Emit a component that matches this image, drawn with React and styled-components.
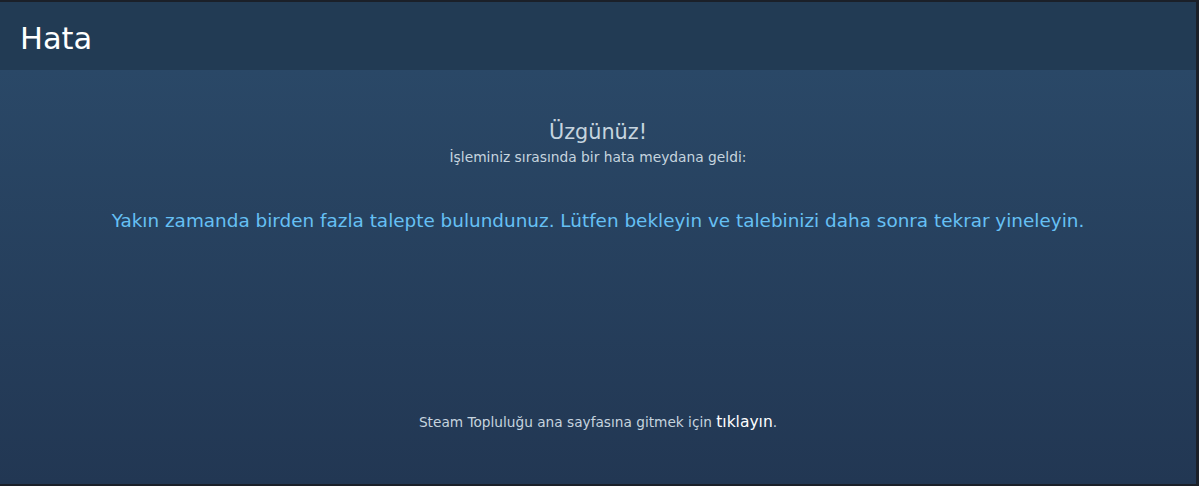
import React from 'react';
import styled, { createGlobalStyle } from 'styled-components';

const GlobalStyle = createGlobalStyle`
    html, body {
        margin: 0;
        padding: 0;
        background: #1b2029;
    }
    #root {
        height: 100vh;
    }
`;

const Frame = styled.div`
    height: 100%;
    box-sizing: border-box;
    border-top: 2px solid #1b2029;
    border-right: 3px solid #1b2029;
    border-bottom: 2px solid #1b2029;
    display: flex;
    flex-direction: column;
    font-family: "DejaVu Sans", Verdana, sans-serif;
`;

const Header = styled.div`
    height: 68px;
    box-sizing: border-box;
    padding: 4px 0 0 20px;
    background: #223b54;
    display: flex;
    align-items: center;
    color: #ffffff;
    font-size: 30.5px;
`;

const Body = styled.div`
    flex: 1;
    background: linear-gradient(to bottom, #2a4867 0%, #223753 100%);
    display: flex;
    flex-direction: column;
    align-items: center;
    text-align: center;
    padding-top: 49px;
`;

const Title = styled.div`
    color: #c6d4df;
    font-size: 20.8px;
    line-height: 26px;
`;

const Sub = styled.div`
    color: #c6d4df;
    font-size: 13.8px;
    line-height: 18px;
    margin-top: 3px;
`;

const Message = styled.div`
    color: #66c0f4;
    font-size: 18.4px;
    line-height: 24px;
    margin-top: 43px;
`;

const Footer = styled.div`
    margin-top: auto;
    margin-bottom: 53px;
    color: #c6d4df;
    font-size: 13.7px;

    a {
        color: #ffffff;
        font-size: 15.5px;
        text-decoration: none;
    }
`;

export default function App() {
    return (
        <>
            <GlobalStyle />
            <Frame>
                <Header>Hata</Header>
                <Body>
                    <Title>Üzgünüz!</Title>
                    <Sub>İşleminiz sırasında bir hata meydana geldi:</Sub>
                    <Message>
                        Yakın zamanda birden fazla talepte bulundunuz. Lütfen bekleyin ve talebinizi daha sonra tekrar yineleyin.
                    </Message>
                    <Footer>
                        Steam Topluluğu ana sayfasına gitmek için <a href="#">tıklayın</a>.
                    </Footer>
                </Body>
            </Frame>
        </>
    );
}
